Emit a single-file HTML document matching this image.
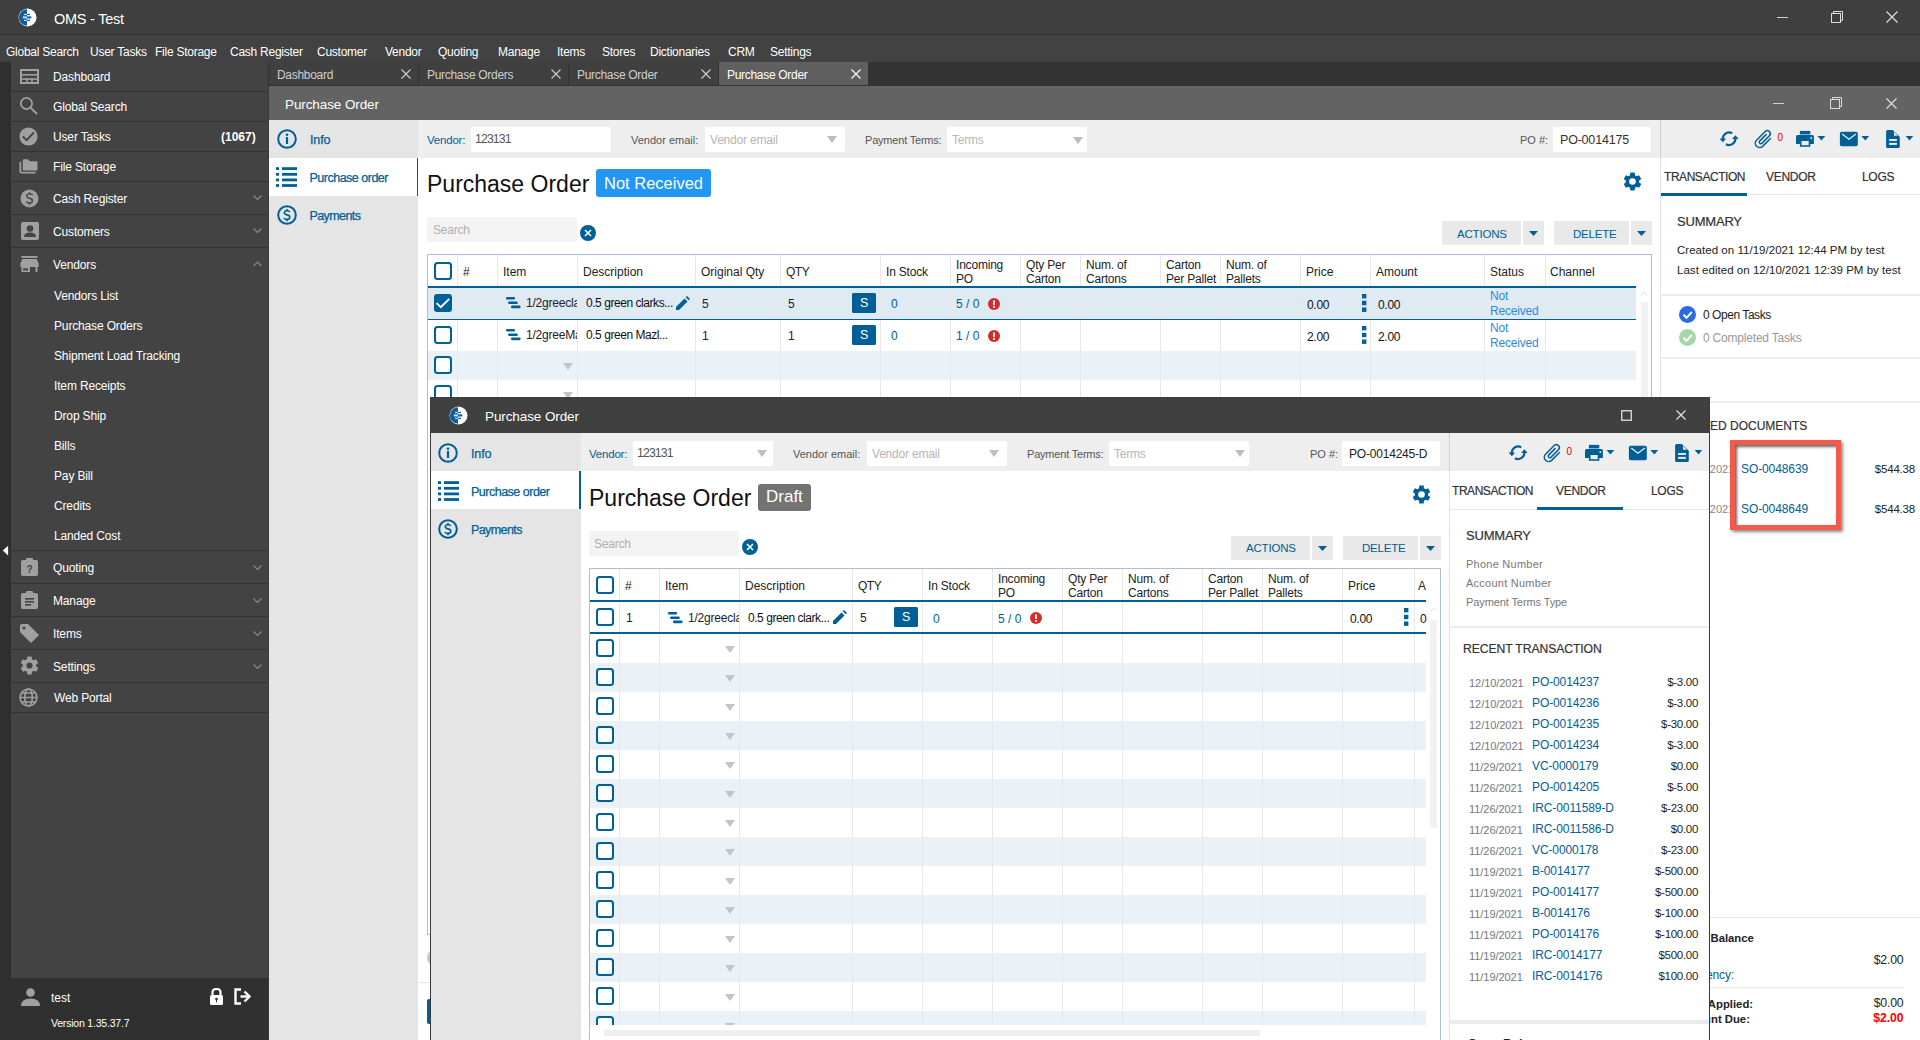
<!DOCTYPE html>
<html><head><meta charset="utf-8">
<style>
*{box-sizing:border-box;margin:0;padding:0}
html,body{width:1920px;height:1040px;overflow:hidden;background:#e5e5e5;font-family:"Liberation Sans",sans-serif;font-size:12px;color:#222}
.a{position:absolute}
.t{position:absolute;white-space:nowrap;line-height:16px}
svg{position:absolute;display:block}
/* title + menu */
#title{left:0;top:0;width:1920px;height:34px;background:#3f3f3f}
#menu{left:0;top:35px;width:1920px;height:27px;background:#424242}
#menu .t{color:#fff;top:8.6px;font-size:12px;letter-spacing:-0.25px}
/* sidebar */
#lstrip{left:0;top:62px;width:11px;height:978px;background:#2f2f2f}
#side{left:11px;top:62px;width:257px;height:916px;background:#434343}
.sep{position:absolute;left:0;width:257px;height:1px;background:#333333}
#side .t{color:#fff;font-size:12px;letter-spacing:-0.15px;margin-top:1.2px}
#userbar{left:11px;top:978px;width:258px;height:62px;background:#303030}
/* tabs */
#tabs{left:269px;top:62px;width:1651px;height:24px;background:#333}
.tab{position:absolute;top:0;height:24px;width:149px;background:#404040}
.tab .t{color:#c8c8c8;top:4px;left:8px;font-size:12px;letter-spacing:-0.2px}
.tab .x{position:absolute;left:131px;top:7px}
/* main window */
#pohdr{left:269px;top:86px;width:1651px;height:34px;background:#636363}
#nav{left:269px;top:120px;width:149px;height:920px;background:#e5e5e5}
#vbar{left:418px;top:120px;width:1502px;height:38px;background:#eeeeee}
#content{left:418px;top:158px;width:1242px;height:882px;background:#fff}
#rpanel{left:1660px;top:158px;width:260px;height:882px;background:#fff}
.inp{position:absolute;background:#fff;border-radius:2px}
.lbl{color:#555}
.blue{color:#0f5b99}
.grid{position:absolute;background:#fff;border:1px solid #a9bfd6}
.hd .t{color:#222}
.cb{position:absolute;width:18px;height:18px;border:2px solid #0f5b99;border-radius:3px;background:#fff}
.cbk{background:#0f5b99}
.vl{position:absolute;width:1px;background:#e6e8ea}
.bl{position:absolute;height:2px;background:#0f5b99}
.sbtn{position:absolute;width:23px;height:20px;background:#0f5b99;color:#fff;font-size:13px;text-align:center;line-height:20px}
.err{position:absolute;width:12px;height:12px;border-radius:50%;background:#d32a2a}
.caret{position:absolute;width:0;height:0;border-left:5px solid transparent;border-right:5px solid transparent;border-top:6px solid #bdbdbd}
.bcaret{position:absolute;width:0;height:0;border-left:5px solid transparent;border-right:5px solid transparent;border-top:5px solid #0f5b99}
.btn{position:absolute;background:#e9e9e9;color:#0f5b99;font-size:12px;text-align:center;line-height:24px}
/* modal */
#modal{left:430px;top:397px;width:1280px;height:643px;background:#fff;border-left:1px solid #3a3a3a;border-right:1px solid #3a3a3a}
</style></head><body>

<!-- TITLE BAR -->
<div id="title" class="a">
  <svg style="left:18px;top:8px" width="19" height="19" viewBox="0 0 19 19"><circle cx="9.5" cy="9.5" r="9" fill="#fff"/><path d="M9 1.3 A8.2 8.2 0 0 0 9 17.7 Z" fill="#0e5e9e"/><rect x="6" y="5.9" width="6" height="1.2" fill="#cfe0ee"/><rect x="4.8" y="8.4" width="8.5" height="2" fill="#cfe0ee"/><rect x="6" y="11.7" width="6" height="1.2" fill="#cfe0ee"/><rect x="9" y="5.9" width="3" height="1.2" fill="#0e5e9e"/><rect x="9" y="8.4" width="4.3" height="2" fill="#0e5e9e"/><rect x="9" y="11.7" width="3" height="1.2" fill="#0e5e9e"/></svg>
  <div class="t" style="left:54px;top:10.5px;color:#fff;font-size:14.5px;letter-spacing:-0.25px">OMS - Test</div>
  <div class="a" style="left:1777px;top:16.5px;width:11px;height:1.5px;background:#d0d0d0"></div>
  <svg style="left:1831px;top:11px" width="12" height="12" viewBox="0 0 12 12"><rect x="0.5" y="2.5" width="9" height="9" fill="none" stroke="#ddd"/><path d="M2.5 2.5V0.5H11.5V9.5H9.5" fill="none" stroke="#ddd"/></svg>
  <svg style="left:1886px;top:11px" width="12" height="12" viewBox="0 0 12 12"><path d="M0.5 0.5L11.5 11.5M11.5 0.5L0.5 11.5" stroke="#ddd" stroke-width="1.2"/></svg>
</div>
<div class="a" style="left:0;top:34px;width:1920px;height:1px;background:#313131"></div>

<!-- MENU -->
<div id="menu" class="a">
  <div class="t" style="left:6px">Global Search</div>
  <div class="t" style="left:90px">User Tasks</div>
  <div class="t" style="left:155px">File Storage</div>
  <div class="t" style="left:230px">Cash Register</div>
  <div class="t" style="left:317px">Customer</div>
  <div class="t" style="left:385px">Vendor</div>
  <div class="t" style="left:438px">Quoting</div>
  <div class="t" style="left:498px">Manage</div>
  <div class="t" style="left:557px">Items</div>
  <div class="t" style="left:602px">Stores</div>
  <div class="t" style="left:650px">Dictionaries</div>
  <div class="t" style="left:728px">CRM</div>
  <div class="t" style="left:770px">Settings</div>
</div>

<!-- SIDEBAR -->
<div id="lstrip" class="a"></div>
<svg style="left:2px;top:545px" width="8" height="11" viewBox="0 0 8 11"><path d="M0.8 5.5L6.1 0.8V10.4Z" fill="#fff"/></svg>
<div id="side" class="a">
  <!-- rows: top offsets relative to side top 62 -->
  <svg style="left:9px;top:7px" width="19" height="15" viewBox="0 0 19 15"><rect x="1" y="1" width="17" height="13" fill="none" stroke="#a0a0a0" stroke-width="2"/><rect x="1" y="5" width="17" height="1.6" fill="#a0a0a0"/><rect x="1" y="9.3" width="17" height="1.6" fill="#a0a0a0"/><rect x="6.2" y="9" width="1.6" height="5" fill="#a0a0a0"/><rect x="11.2" y="9" width="1.6" height="5" fill="#a0a0a0"/></svg>
  <div class="t" style="left:42px;top:6px">Dashboard</div>
  <div class="sep" style="top:29px"></div>
  <svg style="left:7.6px;top:34.4px" width="19" height="19" viewBox="0 0 19 19"><circle cx="7.5" cy="7.5" r="5.6" fill="none" stroke="#a0a0a0" stroke-width="1.8"/><path d="M11.6 11.6L17.5 17.5" stroke="#a0a0a0" stroke-width="1.9" stroke-linecap="round"/></svg>
  <div class="t" style="left:42px;top:36px">Global Search</div>
  <div class="sep" style="top:59px"></div>
  <svg style="left:8.2px;top:64.9px" width="19" height="19" viewBox="0 0 19 19"><circle cx="9.5" cy="9.5" r="9.1" fill="#a0a0a0"/><path d="M3.8 9.3L7.6 13.1L15 5.3" fill="none" stroke="#434343" stroke-width="1.9"/></svg>
  <div class="t" style="left:42px;top:66px">User Tasks</div>
  <div class="t" style="left:210px;top:66px;font-weight:bold;letter-spacing:0">(1067)</div>
  <div class="sep" style="top:89px"></div>
  <svg style="left:8px;top:97px" width="19" height="15" viewBox="0 0 19 15"><path d="M1.3 3V12.3Q1.3 13.6 2.6 13.6H16.5" fill="none" stroke="#a0a0a0" stroke-width="1.8"/><path d="M3.7 1.3Q3.7 0.3 4.7 0.3H9L10.8 2.3H17.5Q18.5 2.3 18.5 3.3V10.6Q18.5 11.6 17.5 11.6H4.7Q3.7 11.6 3.7 10.6Z" fill="#a0a0a0"/></svg>
  <div class="t" style="left:42px;top:96px">File Storage</div>
  <div class="sep" style="top:119px"></div>
  <svg style="left:9.2px;top:126.9px" width="19" height="19" viewBox="0 0 19 19"><circle cx="9.5" cy="9.5" r="9" fill="#a0a0a0"/><path d="M12.6 6.2Q11.9 4.9 9.5 4.9Q6.7 4.9 6.7 7.1Q6.7 8.8 9.5 9.3Q12.4 9.8 12.4 11.8Q12.4 14 9.5 14Q7.1 14 6.4 12.6" fill="none" stroke="#434343" stroke-width="1.4"/><path d="M9.5 3.2V5M9.5 13.9V15.8" stroke="#434343" stroke-width="1.4"/></svg>
  <div class="t" style="left:42px;top:128px">Cash Register</div>
  <svg style="left:242px;top:133px" width="9" height="6" viewBox="0 0 9 6"><path d="M0.5 0.5L4.5 4.5L8.5 0.5" fill="none" stroke="#8a8a8a" stroke-width="1.2"/></svg>
  <div class="sep" style="top:152px"></div>
  <svg style="left:10px;top:160px" width="18" height="18" viewBox="0 0 18 18"><rect x="0" y="0" width="18" height="18" rx="2" fill="#a0a0a0"/><circle cx="9" cy="6.5" r="3.3" fill="#434343"/><path d="M3 15Q3 10.5 9 10.5Q15 10.5 15 15Z" fill="#434343"/></svg>
  <div class="t" style="left:42px;top:161px">Customers</div>
  <svg style="left:242px;top:166px" width="9" height="6" viewBox="0 0 9 6"><path d="M0.5 0.5L4.5 4.5L8.5 0.5" fill="none" stroke="#8a8a8a" stroke-width="1.2"/></svg>
  <div class="sep" style="top:185px"></div>
  <svg style="left:9px;top:193px" width="19" height="18" viewBox="0 0 19 18"><rect x="1.4" y="1" width="16.1" height="1.9" fill="#a0a0a0"/><path d="M2.3 3.9H16.7L18.6 8.5V12H0.4V8.5Z" fill="#a0a0a0"/><rect x="1.4" y="12" width="8.6" height="5" fill="#a0a0a0"/><rect x="3.1" y="13.4" width="4.9" height="2" fill="#434343"/><rect x="15.5" y="12" width="2" height="5" fill="#a0a0a0"/></svg>
  <div class="t" style="left:42px;top:194px">Vendors</div>
  <svg style="left:242px;top:199px" width="9" height="6" viewBox="0 0 9 6"><path d="M0.5 5L4.5 1L8.5 5" fill="none" stroke="#8a8a8a" stroke-width="1.2"/></svg>
  <div class="t" style="left:43px;top:225px">Vendors List</div>
  <div class="t" style="left:43px;top:255px">Purchase Orders</div>
  <div class="t" style="left:43px;top:285px">Shipment Load Tracking</div>
  <div class="t" style="left:43px;top:315px">Item Receipts</div>
  <div class="t" style="left:43px;top:345px">Drop Ship</div>
  <div class="t" style="left:43px;top:375px">Bills</div>
  <div class="t" style="left:43px;top:405px">Pay Bill</div>
  <div class="t" style="left:43px;top:435px">Credits</div>
  <div class="t" style="left:43px;top:465px">Landed Cost</div>
  <div class="sep" style="top:488px"></div>
  <svg style="left:10px;top:496px" width="17" height="18" viewBox="0 0 17 18"><rect x="0" y="2" width="17" height="16" rx="2" fill="#a0a0a0"/><rect x="5" y="0" width="7" height="4" rx="1" fill="#a0a0a0"/><text x="8.5" y="15" font-family="Liberation Sans" font-size="10" font-weight="bold" fill="#434343" text-anchor="middle">?</text></svg>
  <div class="t" style="left:42px;top:497px">Quoting</div>
  <svg style="left:242px;top:503px" width="9" height="6" viewBox="0 0 9 6"><path d="M0.5 0.5L4.5 4.5L8.5 0.5" fill="none" stroke="#8a8a8a" stroke-width="1.2"/></svg>
  <div class="sep" style="top:521px"></div>
  <svg style="left:10px;top:529px" width="17" height="18" viewBox="0 0 17 18"><rect x="0" y="2" width="17" height="16" rx="2" fill="#a0a0a0"/><rect x="5" y="0" width="7" height="4" rx="1" fill="#a0a0a0"/><rect x="4" y="7" width="9" height="1.6" fill="#434343"/><rect x="4" y="10" width="9" height="1.6" fill="#434343"/><rect x="4" y="13" width="6" height="1.6" fill="#434343"/></svg>
  <div class="t" style="left:42px;top:530px">Manage</div>
  <svg style="left:242px;top:536px" width="9" height="6" viewBox="0 0 9 6"><path d="M0.5 0.5L4.5 4.5L8.5 0.5" fill="none" stroke="#8a8a8a" stroke-width="1.2"/></svg>
  <div class="sep" style="top:554px"></div>
  <svg style="left:9px;top:562px" width="19" height="19" viewBox="0 0 19 19"><path d="M0 2Q0 0 2 0H8L19 11L11 19L0 8Z" fill="#a0a0a0"/><circle cx="4" cy="4" r="1.6" fill="#434343"/></svg>
  <div class="t" style="left:42px;top:563px">Items</div>
  <svg style="left:242px;top:569px" width="9" height="6" viewBox="0 0 9 6"><path d="M0.5 0.5L4.5 4.5L8.5 0.5" fill="none" stroke="#8a8a8a" stroke-width="1.2"/></svg>
  <div class="sep" style="top:587px"></div>
  <svg style="left:9px;top:594px" width="19" height="19" viewBox="0 0 19 19"><g fill="#a0a0a0"><circle cx="9.5" cy="9.5" r="6.7"/><path d="M7.3 0.5999999999999996H11.7L12.1 4.5H6.9Z M7.3 18.4H11.7L12.1 14.5H6.9Z" transform="rotate(0 9.5 9.5)"/><path d="M7.3 0.5999999999999996H11.7L12.1 4.5H6.9Z M7.3 18.4H11.7L12.1 14.5H6.9Z" transform="rotate(60 9.5 9.5)"/><path d="M7.3 0.5999999999999996H11.7L12.1 4.5H6.9Z M7.3 18.4H11.7L12.1 14.5H6.9Z" transform="rotate(120 9.5 9.5)"/></g><circle cx="9.5" cy="9.5" r="3.1" fill="#434343"/></svg>
  <div class="t" style="left:42px;top:596px">Settings</div>
  <svg style="left:242px;top:602px" width="9" height="6" viewBox="0 0 9 6"><path d="M0.5 0.5L4.5 4.5L8.5 0.5" fill="none" stroke="#8a8a8a" stroke-width="1.2"/></svg>
  <div class="sep" style="top:620px"></div>
  <svg style="left:8px;top:626px" width="19" height="19" viewBox="0 0 19 19"><g fill="none" stroke="#a0a0a0" stroke-width="1.6"><circle cx="9.5" cy="9.5" r="8.5"/><ellipse cx="9.5" cy="9.5" rx="3.8" ry="8.5"/><path d="M1 9.5H18M2.5 5H16.5M2.5 14H16.5"/></g></svg>
  <div class="t" style="left:43px;top:627px">Web Portal</div>
  <div class="sep" style="top:650px"></div>
</div>
<div id="userbar" class="a">
  <svg style="left:10px;top:10px" width="19" height="18" viewBox="0 0 19 18"><circle cx="9.5" cy="4.5" r="4.3" fill="#a0a0a0"/><path d="M0 18Q0 10.5 9.5 10.5Q19 10.5 19 18Z" fill="#a0a0a0"/></svg>
  <div class="t" style="left:40px;top:12px;color:#fff;font-size:12px">test</div>
  <svg style="left:198px;top:10px" width="15" height="17" viewBox="0 0 15 17"><path d="M3.5 7V4.5Q3.5 1 7.5 1Q11.5 1 11.5 4.5V7" fill="none" stroke="#fff" stroke-width="2.2"/><rect x="1" y="7" width="13" height="10" rx="1.5" fill="#fff"/><circle cx="7.5" cy="11" r="1.3" fill="#303030"/><rect x="7" y="11" width="1" height="3.2" fill="#303030"/></svg>
  <svg style="left:223px;top:10px" width="18" height="17" viewBox="0 0 18 17"><path d="M7 1.5H1.5V15.5H7" fill="none" stroke="#fff" stroke-width="2.4"/><path d="M6.5 8.5H14" stroke="#fff" stroke-width="2.4"/><path d="M10.5 3.5L15.5 8.5L10.5 13.5" fill="none" stroke="#fff" stroke-width="2.4"/></svg>
  <div class="t" style="left:40px;top:37px;color:#fff;font-size:10.5px;letter-spacing:-0.2px">Version 1.35.37.7</div>
</div>

<!-- TABS -->
<div class="a" style="left:268px;top:62px;width:1652px;height:24px;background:#333333;"></div>
<div class="a" style="left:268px;top:86px;width:1px;height:954px;background:#3a3a3a;"></div>
<div class="a" style="left:269px;top:62px;width:149px;height:23px;background:#404040;"></div>
<div class="t" style="left:277px;top:68.14px;font-size:12px;line-height:14px;color:#cfcfcf;font-weight:normal;letter-spacing:-0.3px;">Dashboard</div>
<svg style="left:401px;top:69px" width="10" height="10" viewBox="0 0 10 10"><path d="M0.5 0.5L9.5 9.5M9.5 0.5L0.5 9.5" stroke="#cfcfcf" stroke-width="1.1"/></svg>
<div class="a" style="left:419px;top:62px;width:149px;height:23px;background:#404040;"></div>
<div class="t" style="left:427px;top:68.14px;font-size:12px;line-height:14px;color:#cfcfcf;font-weight:normal;letter-spacing:-0.3px;">Purchase Orders</div>
<svg style="left:551px;top:69px" width="10" height="10" viewBox="0 0 10 10"><path d="M0.5 0.5L9.5 9.5M9.5 0.5L0.5 9.5" stroke="#cfcfcf" stroke-width="1.1"/></svg>
<div class="a" style="left:569px;top:62px;width:149px;height:23px;background:#404040;"></div>
<div class="t" style="left:577px;top:68.14px;font-size:12px;line-height:14px;color:#cfcfcf;font-weight:normal;letter-spacing:-0.3px;">Purchase Order</div>
<svg style="left:701px;top:69px" width="10" height="10" viewBox="0 0 10 10"><path d="M0.5 0.5L9.5 9.5M9.5 0.5L0.5 9.5" stroke="#cfcfcf" stroke-width="1.1"/></svg>
<div class="a" style="left:719px;top:62px;width:149px;height:23px;background:#5f5f5f;"></div>
<div class="t" style="left:727px;top:68.14px;font-size:12px;line-height:14px;color:#fff;font-weight:normal;letter-spacing:-0.3px;">Purchase Order</div>
<svg style="left:851px;top:69px" width="10" height="10" viewBox="0 0 10 10"><path d="M0.5 0.5L9.5 9.5M9.5 0.5L0.5 9.5" stroke="#fff" stroke-width="1.1"/></svg>
<div class="a" style="left:269px;top:86px;width:1651px;height:34px;background:#636363;"></div>
<div class="t" style="left:285px;top:96.62px;font-size:13.5px;line-height:16px;color:#fff;font-weight:normal;letter-spacing:-0.1px;">Purchase Order</div>
<div class="a" style="left:1773px;top:102.5px;width:11px;height:1.5px;background:#d0d0d0;"></div>
<svg style="left:1830px;top:97px" width="12" height="12" viewBox="0 0 12 12"><rect x="0.5" y="2.5" width="9" height="9" fill="none" stroke="#dcdcdc"/><path d="M2.5 2.5V0.5H11.5V9.5H9.5" fill="none" stroke="#dcdcdc"/></svg>
<svg style="left:1886px;top:98px" width="11" height="11" viewBox="0 0 11 11"><path d="M0.5 0.5L10.5 10.5M10.5 0.5L0.5 10.5" stroke="#dcdcdc" stroke-width="1.2"/></svg>
<div class="a" style="left:269px;top:120px;width:149px;height:920px;background:#e5e5e5;"></div>
<div class="a" style="left:269px;top:158px;width:148px;height:38px;background:#ffffff;"></div>
<div class="a" style="left:417px;top:158px;width:2px;height:38px;background:#006096;"></div>
<svg style="left:276.5px;top:129px" width="20" height="20" viewBox="0 0 20 20"><circle cx="10" cy="10" r="8.8" fill="none" stroke="#006096" stroke-width="2"/><circle cx="10" cy="5.8" r="1.3" fill="#006096"/><rect x="8.9" y="8" width="2.2" height="7" fill="#006096"/></svg>
<div class="t" style="left:310px;top:132.67px;font-size:12.5px;line-height:15px;color:#006096;font-weight:normal;letter-spacing:-0.1px;-webkit-text-stroke:0.25px #006096">Info</div>
<svg style="left:276px;top:167px" width="21" height="20" viewBox="0 0 21 20"><g fill="#006096"><rect x="0" y="0.2" width="3" height="2.8"/><rect x="6" y="0.2" width="15" height="2.8"/><rect x="0" y="5.9" width="3" height="2.8"/><rect x="6" y="5.9" width="15" height="2.8"/><rect x="0" y="11.5" width="3" height="2.8"/><rect x="6" y="11.5" width="15" height="2.8"/><rect x="0" y="17.1" width="3" height="2.8"/><rect x="6" y="17.1" width="15" height="2.8"/></g></svg>
<div class="t" style="left:309.5px;top:170.67px;font-size:12.5px;line-height:15px;color:#006096;font-weight:normal;letter-spacing:-0.5px;-webkit-text-stroke:0.25px #006096">Purchase order</div>
<svg style="left:276.5px;top:205px" width="20" height="20" viewBox="0 0 20 20"><circle cx="10" cy="10" r="8.8" fill="none" stroke="#006096" stroke-width="2"/><path d="M12.9 6.9Q12.2 5.7 10 5.7Q7.3 5.7 7.3 7.8Q7.3 9.4 10 9.9Q12.8 10.4 12.8 12.3Q12.8 14.4 10 14.4Q7.7 14.4 7 13" fill="none" stroke="#006096" stroke-width="1.6"/><path d="M10 3.9V5.8M10 14.3V16.2" stroke="#006096" stroke-width="1.6"/></svg>
<div class="t" style="left:309.5px;top:208.67px;font-size:12.5px;line-height:15px;color:#006096;font-weight:normal;letter-spacing:-0.6px;-webkit-text-stroke:0.25px #006096">Payments</div>
<div class="a" style="left:418px;top:120px;width:1502px;height:38px;background:#eeeeee;"></div>
<div class="a" style="left:1660px;top:120px;width:1px;height:38px;background:#d0d0d0;"></div>
<div class="a" style="left:418px;top:158px;width:1242px;height:882px;background:#ffffff;"></div>
<div class="a" style="left:1660px;top:158px;width:1px;height:882px;background:#e4e4e4;"></div>
<div class="a" style="left:1661px;top:158px;width:259px;height:882px;background:#ffffff;"></div>
<div class="t" style="left:427px;top:133.32px;font-size:11.5px;line-height:14px;color:#006096;font-weight:normal;letter-spacing:-0.2px;">Vendor:</div>
<div class="a" style="left:471px;top:127px;width:140px;height:25px;background:#fff;border-radius:2px"></div>
<div class="t" style="left:475px;top:132.24px;font-size:12.3px;line-height:15px;color:#555;font-weight:normal;letter-spacing:-0.9px;">123131</div>
<div class="t" style="left:631px;top:133.99px;font-size:11px;line-height:13px;color:#555;font-weight:normal;letter-spacing:0px;">Vendor email:</div>
<div class="a" style="left:705px;top:127px;width:140px;height:25px;background:#fff;border-radius:2px"></div>
<div class="t" style="left:710px;top:133.34px;font-size:12px;line-height:14px;color:#b5b5b5;font-weight:normal;letter-spacing:-0.2px;">Vendor email</div>
<svg style="left:827px;top:136px" width="10" height="7" viewBox="0 0 10 7"><path d="M0 0H10L5.0 7Z" fill="#bdbdbd"/></svg>
<div class="t" style="left:865px;top:133.99px;font-size:11px;line-height:13px;color:#555;font-weight:normal;letter-spacing:-0.2px;">Payment Terms:</div>
<div class="a" style="left:947px;top:127px;width:140px;height:25px;background:#fff;border-radius:2px"></div>
<div class="t" style="left:952px;top:133.34px;font-size:12px;line-height:14px;color:#b5b5b5;font-weight:normal;letter-spacing:-0.2px;">Terms</div>
<svg style="left:1073px;top:137px" width="10" height="7" viewBox="0 0 10 7"><path d="M0 0H10L5.0 7Z" fill="#bdbdbd"/></svg>
<div class="t" style="left:1520px;top:133.99px;font-size:11px;line-height:13px;color:#555;font-weight:normal;letter-spacing:0.0px;">PO #:</div>
<div class="a" style="left:1553px;top:127px;width:98px;height:25px;background:#fff;border-radius:2px"></div>
<div class="t" style="left:1560px;top:133.17px;font-size:12.5px;line-height:15px;color:#333;font-weight:normal;letter-spacing:-0.2px;">PO-0014175</div>
<svg style="left:1715px;top:125px" width="200" height="30" viewBox="0 0 200 30"><g fill="none" stroke="#006096" stroke-width="2.1"><path d="M17.25 8.34A6.3 6.3 0 0 0 7.8 14"/><path d="M10.95 19.26A6.3 6.3 0 0 0 20.4 13.6"/></g><path d="M4.6 13.6H11.1L7.85 17.2Z" fill="#006096"/><path d="M17.1 13.9H23.6L20.35 10.3Z" fill="#006096"/><path d="M55.45 13.55L47.65 21.35A4.35 4.35 0 0 1 41.5 15.2L50.15 6.55A3 3 0 0 1 54.4 10.8L46.85 18.35A1.6 1.6 0 0 1 44.6 16.1L51.05 9.65" fill="none" stroke="#006096" stroke-width="1.5" stroke-linecap="round"/><rect x="84.9" y="5.9" width="10.4" height="3.2" fill="#006096"/><rect x="84.9" y="9.1" width="10.4" height="1" fill="#7fa6c8"/><path d="M82.5 10.1H97.4Q98.9 10.1 98.9 11.6V18.9H81V11.6Q81 10.1 82.5 10.1Z" fill="#006096"/><circle cx="96.3" cy="13" r="0.9" fill="#eee"/><rect x="84.9" y="15.3" width="10.4" height="6.5" fill="#006096"/><rect x="86.5" y="16" width="7.2" height="4.2" fill="#eee"/><path d="M102.5 11.1H110.3L106.4 15.6Z" fill="#006096"/><rect x="124.9" y="6.8" width="17.9" height="14.4" rx="1.8" fill="#006096"/><path d="M127.2 9.1L134 14.3L140.9 9.1" fill="none" stroke="#eee" stroke-width="1.3"/><path d="M146.4 11.1H154.2L150.3 15.6Z" fill="#006096"/><path d="M172.8 4.9H177.7L184.8 11.7V21.4Q184.8 23.1 183.1 23.1H172.8Q171.1 23.1 171.1 21.4V6.6Q171.1 4.9 172.8 4.9Z" fill="#006096"/><path d="M179 6.8L182.9 10.7H179Z" fill="#eee"/><rect x="174.1" y="14" width="7.8" height="1.9" fill="#eee"/><rect x="174.1" y="17.9" width="7.8" height="2" fill="#eee"/><path d="M190.7 11.1H198.2L194.5 15.6Z" fill="#006096"/></svg>
<div class="t" style="left:1777.5px;top:132.03px;font-size:10px;line-height:12px;color:#e60000;font-weight:normal;letter-spacing:0.0px;">0</div>
<div class="t" style="left:427px;top:169.93px;font-size:23px;line-height:28px;color:#111;font-weight:normal;letter-spacing:0px;">Purchase Order</div>
<div class="a" style="left:596px;top:169px;width:115px;height:28.3px;background:#2196f3;border-radius:3px"></div>
<div class="t" style="left:604px;top:173.08px;font-size:16.5px;line-height:20px;color:#fff;font-weight:normal;letter-spacing:0px;">Not Received</div>
<svg style="left:1622.75px;top:171.5px" width="19" height="19" viewBox="0 0 19 19"><g fill="#006096"><circle cx="9.5" cy="9.5" r="6.7"/><path d="M7.3 0.5999999999999996H11.7L12.1 4.5H6.9Z M7.3 18.4H11.7L12.1 14.5H6.9Z" transform="rotate(0 9.5 9.5)"/><path d="M7.3 0.5999999999999996H11.7L12.1 4.5H6.9Z M7.3 18.4H11.7L12.1 14.5H6.9Z" transform="rotate(60 9.5 9.5)"/><path d="M7.3 0.5999999999999996H11.7L12.1 4.5H6.9Z M7.3 18.4H11.7L12.1 14.5H6.9Z" transform="rotate(120 9.5 9.5)"/></g><circle cx="9.5" cy="9.5" r="3.3" fill="#fff"/></svg>
<div class="a" style="left:427px;top:217px;width:150px;height:25px;background:#f3f3f3;border-radius:2px"></div>
<div class="t" style="left:433px;top:223.34px;font-size:12px;line-height:14px;color:#b0b0b0;font-weight:normal;letter-spacing:-0.2px;">Search</div>
<svg style="left:580px;top:225px" width="16" height="16" viewBox="0 0 16 16"><circle cx="8" cy="8" r="8" fill="#006096"/><path d="M5 5L11 11M11 5L5 11" stroke="#fff" stroke-width="1.6"/></svg>
<div class="a" style="left:1442px;top:221px;width:79px;height:24px;background:#e9e9e9;"></div>
<div class="t" style="left:1457px;top:226.52px;font-size:11.5px;line-height:14px;color:#006096;font-weight:normal;letter-spacing:-0.2px;">ACTIONS</div>
<div class="a" style="left:1523px;top:221px;width:21px;height:24px;background:#e9e9e9;"></div>
<svg style="left:1529px;top:231px" width="9" height="5" viewBox="0 0 9 5"><path d="M0 0H9L4.5 5Z" fill="#006096"/></svg>
<div class="a" style="left:1554px;top:221px;width:75px;height:24px;background:#e9e9e9;"></div>
<div class="t" style="left:1573px;top:226.52px;font-size:11.5px;line-height:14px;color:#006096;font-weight:normal;letter-spacing:-0.2px;">DELETE</div>
<div class="a" style="left:1631px;top:221px;width:21px;height:24px;background:#e9e9e9;"></div>
<svg style="left:1637px;top:231px" width="9" height="5" viewBox="0 0 9 5"><path d="M0 0H9L4.5 5Z" fill="#006096"/></svg>
<div class="a" style="left:427px;top:254px;width:1225px;height:143px;border:1px solid #abc0d6;border-bottom:none;background:#fff"></div>
<div class="a" style="left:428px;top:288px;width:1208px;height:31px;background:#dfeaf3;"></div>
<div class="a" style="left:428px;top:351px;width:1208px;height:29px;background:#ebf2f7;"></div>
<div class="a" style="left:457px;top:255px;width:1px;height:142px;background:#e6e8ea;"></div>
<div class="a" style="left:497px;top:255px;width:1px;height:142px;background:#e6e8ea;"></div>
<div class="a" style="left:577px;top:255px;width:1px;height:142px;background:#e6e8ea;"></div>
<div class="a" style="left:695px;top:255px;width:1px;height:142px;background:#e6e8ea;"></div>
<div class="a" style="left:780px;top:255px;width:1px;height:142px;background:#e6e8ea;"></div>
<div class="a" style="left:880px;top:255px;width:1px;height:142px;background:#e6e8ea;"></div>
<div class="a" style="left:950px;top:255px;width:1px;height:142px;background:#e6e8ea;"></div>
<div class="a" style="left:1020px;top:255px;width:1px;height:142px;background:#e6e8ea;"></div>
<div class="a" style="left:1080px;top:255px;width:1px;height:142px;background:#e6e8ea;"></div>
<div class="a" style="left:1160px;top:255px;width:1px;height:142px;background:#e6e8ea;"></div>
<div class="a" style="left:1220px;top:255px;width:1px;height:142px;background:#e6e8ea;"></div>
<div class="a" style="left:1300px;top:255px;width:1px;height:142px;background:#e6e8ea;"></div>
<div class="a" style="left:1370px;top:255px;width:1px;height:142px;background:#e6e8ea;"></div>
<div class="a" style="left:1484px;top:255px;width:1px;height:142px;background:#e6e8ea;"></div>
<div class="a" style="left:1545px;top:255px;width:1px;height:142px;background:#e6e8ea;"></div>
<div class="a" style="left:428px;top:286px;width:1208px;height:2px;background:#006096;"></div>
<div class="a" style="left:428px;top:318.8px;width:1208px;height:1.7px;background:#006096;"></div>
<div class="a" style="left:1640.5px;top:301.5px;width:7px;height:96px;background:#f2f2f2;"></div>
<svg style="left:1640px;top:291px" width="8" height="5" viewBox="0 0 8 5"><path d="M0.5 4.5L4 1L7.5 4.5" fill="none" stroke="#e6e6e6" stroke-width="1"/></svg>
<svg style="left:434px;top:262px" width="18" height="18" viewBox="0 0 18 18"><rect x="1" y="1" width="16" height="16" rx="2.5" fill="#fff" stroke="#006096" stroke-width="2"/></svg>
<div class="t" style="left:463px;top:264.84px;font-size:12px;line-height:14px;color:#222;font-weight:normal;letter-spacing:0.0px;">#</div>
<div class="t" style="left:503px;top:264.84px;font-size:12px;line-height:14px;color:#222;font-weight:normal;letter-spacing:0.0px;">Item</div>
<div class="t" style="left:583px;top:264.84px;font-size:12px;line-height:14px;color:#222;font-weight:normal;letter-spacing:0.0px;">Description</div>
<div class="t" style="left:701px;top:264.84px;font-size:12px;line-height:14px;color:#222;font-weight:normal;letter-spacing:0.0px;">Original Qty</div>
<div class="t" style="left:786px;top:264.84px;font-size:12px;line-height:14px;color:#222;font-weight:normal;letter-spacing:-0.5px;">QTY</div>
<div class="t" style="left:886px;top:264.84px;font-size:12px;line-height:14px;color:#222;font-weight:normal;letter-spacing:-0.2px;">In Stock</div>
<div class="t" style="left:956px;top:257.54px;font-size:12px;line-height:14px;color:#222;font-weight:normal;letter-spacing:-0.2px;">Incoming</div>
<div class="t" style="left:956px;top:272.04px;font-size:12px;line-height:14px;color:#222;font-weight:normal;letter-spacing:-0.2px;">PO</div>
<div class="t" style="left:1026px;top:257.54px;font-size:12px;line-height:14px;color:#222;font-weight:normal;letter-spacing:-0.2px;">Qty Per</div>
<div class="t" style="left:1026px;top:272.04px;font-size:12px;line-height:14px;color:#222;font-weight:normal;letter-spacing:-0.2px;">Carton</div>
<div class="t" style="left:1086px;top:257.54px;font-size:12px;line-height:14px;color:#222;font-weight:normal;letter-spacing:-0.2px;">Num. of</div>
<div class="t" style="left:1086px;top:272.04px;font-size:12px;line-height:14px;color:#222;font-weight:normal;letter-spacing:-0.2px;">Cartons</div>
<div class="t" style="left:1166px;top:257.54px;font-size:12px;line-height:14px;color:#222;font-weight:normal;letter-spacing:-0.2px;">Carton</div>
<div class="t" style="left:1166px;top:272.04px;font-size:12px;line-height:14px;color:#222;font-weight:normal;letter-spacing:-0.2px;">Per Pallet</div>
<div class="t" style="left:1226px;top:257.54px;font-size:12px;line-height:14px;color:#222;font-weight:normal;letter-spacing:-0.2px;">Num. of</div>
<div class="t" style="left:1226px;top:272.04px;font-size:12px;line-height:14px;color:#222;font-weight:normal;letter-spacing:-0.2px;">Pallets</div>
<div class="t" style="left:1306px;top:264.84px;font-size:12px;line-height:14px;color:#222;font-weight:normal;letter-spacing:0.0px;">Price</div>
<div class="t" style="left:1376px;top:264.84px;font-size:12px;line-height:14px;color:#222;font-weight:normal;letter-spacing:0.0px;">Amount</div>
<div class="t" style="left:1490px;top:264.84px;font-size:12px;line-height:14px;color:#222;font-weight:normal;letter-spacing:0.0px;">Status</div>
<div class="t" style="left:1550px;top:264.84px;font-size:12px;line-height:14px;color:#222;font-weight:normal;letter-spacing:0.0px;">Channel</div>
<svg style="left:434px;top:294px" width="18" height="18" viewBox="0 0 18 18"><rect x="0" y="0" width="18" height="18" rx="3" fill="#006096"/><path d="M2.6 9.1L6.9 13.2L15.2 4.8" fill="none" stroke="#fff" stroke-width="1.9"/></svg>
<svg style="left:506px;top:297.4px" width="15" height="12" viewBox="0 0 15 12"><g fill="#006096"><rect x="0" y="0" width="9" height="2.6" rx="1.1"/><rect x="2.1" y="4.4" width="9.7" height="2.6" rx="1.1"/><rect x="5" y="8.6" width="9.6" height="2.6" rx="1.1"/></g></svg>
<div class="a" style="left:526px;top:294px;width:51px;height:18px;overflow:hidden">
<div class="t" style="left:0px;top:2.34px;font-size:12px;line-height:14px;color:#222;font-weight:normal;letter-spacing:-0.2px;">1/2greeclarks</div>
</div>
<div class="t" style="left:586px;top:296.34px;font-size:12px;line-height:14px;color:#111;font-weight:normal;letter-spacing:-0.45px;">0.5 green clarks...</div>
<svg style="left:676px;top:296px" width="14" height="14" viewBox="0 0 14 14"><path d="M0 14V11L8.5 2.5L11.5 5.5L3 14Z" fill="#006096"/><path d="M9.7 1.3L11 0L14 3L12.7 4.3Z" fill="#006096"/></svg>
<div class="t" style="left:702px;top:296.84px;font-size:12px;line-height:14px;color:#222;font-weight:normal;letter-spacing:0.0px;">5</div>
<div class="t" style="left:788px;top:297.34px;font-size:12px;line-height:14px;color:#222;font-weight:normal;letter-spacing:0.0px;">5</div>
<div class="a" style="left:852px;top:293px;width:24px;height:20px;background:#006096;border-radius:1.5px"></div>
<div class="t" style="left:860px;top:296.17px;font-size:12.5px;line-height:15px;color:#fff;font-weight:normal;letter-spacing:0.0px;">S</div>
<div class="t" style="left:891px;top:297.34px;font-size:12px;line-height:14px;color:#006096;font-weight:normal;letter-spacing:0.0px;">0</div>
<div class="t" style="left:956px;top:297.34px;font-size:12px;line-height:14px;color:#006096;font-weight:normal;letter-spacing:0px;">5 / 0</div>
<svg style="left:987.5px;top:297.5px" width="12" height="12" viewBox="0 0 12 12"><circle cx="6" cy="6" r="6" fill="#d62b2b"/><rect x="5.1" y="2.4" width="1.8" height="4.6" fill="#fff"/><rect x="5.1" y="8" width="1.8" height="1.8" fill="#fff"/></svg>
<div class="t" style="left:1307px;top:297.84px;font-size:12px;line-height:14px;color:#111;font-weight:normal;letter-spacing:-0.3px;">0.00</div>
<svg style="left:1361.6px;top:294.1px" width="5" height="18" viewBox="0 0 5 18"><g fill="#006096"><rect x="0" y="0" width="4.4" height="4.4"/><rect x="0" y="6.8" width="4.4" height="4.4"/><rect x="0" y="13.5" width="4.4" height="4.4"/></g></svg>
<div class="t" style="left:1378px;top:297.84px;font-size:12px;line-height:14px;color:#111;font-weight:normal;letter-spacing:-0.3px;">0.00</div>
<div class="t" style="left:1490px;top:288.84px;font-size:12px;line-height:14px;color:#2e8ade;font-weight:normal;letter-spacing:-0.2px;">Not</div>
<div class="t" style="left:1490px;top:303.84px;font-size:12px;line-height:14px;color:#2e8ade;font-weight:normal;letter-spacing:-0.2px;">Received</div>
<svg style="left:434px;top:326px" width="18" height="18" viewBox="0 0 18 18"><rect x="1" y="1" width="16" height="16" rx="2.5" fill="#fff" stroke="#006096" stroke-width="2"/></svg>
<svg style="left:506px;top:329.4px" width="15" height="12" viewBox="0 0 15 12"><g fill="#006096"><rect x="0" y="0" width="9" height="2.6" rx="1.1"/><rect x="2.1" y="4.4" width="9.7" height="2.6" rx="1.1"/><rect x="5" y="8.6" width="9.6" height="2.6" rx="1.1"/></g></svg>
<div class="a" style="left:526px;top:326px;width:51px;height:18px;overflow:hidden">
<div class="t" style="left:0px;top:2.34px;font-size:12px;line-height:14px;color:#222;font-weight:normal;letter-spacing:-0.2px;">1/2greeMazl</div>
</div>
<div class="t" style="left:586px;top:328.34px;font-size:12px;line-height:14px;color:#111;font-weight:normal;letter-spacing:-0.45px;">0.5 green Mazl...</div>
<div class="t" style="left:702px;top:328.84px;font-size:12px;line-height:14px;color:#222;font-weight:normal;letter-spacing:0.0px;">1</div>
<div class="t" style="left:788px;top:329.34px;font-size:12px;line-height:14px;color:#222;font-weight:normal;letter-spacing:0.0px;">1</div>
<div class="a" style="left:852px;top:325px;width:24px;height:20px;background:#006096;border-radius:1.5px"></div>
<div class="t" style="left:860px;top:328.17px;font-size:12.5px;line-height:15px;color:#fff;font-weight:normal;letter-spacing:0.0px;">S</div>
<div class="t" style="left:891px;top:329.34px;font-size:12px;line-height:14px;color:#006096;font-weight:normal;letter-spacing:0.0px;">0</div>
<div class="t" style="left:956px;top:329.34px;font-size:12px;line-height:14px;color:#006096;font-weight:normal;letter-spacing:0px;">1 / 0</div>
<svg style="left:987.5px;top:329.5px" width="12" height="12" viewBox="0 0 12 12"><circle cx="6" cy="6" r="6" fill="#d62b2b"/><rect x="5.1" y="2.4" width="1.8" height="4.6" fill="#fff"/><rect x="5.1" y="8" width="1.8" height="1.8" fill="#fff"/></svg>
<div class="t" style="left:1307px;top:329.84px;font-size:12px;line-height:14px;color:#111;font-weight:normal;letter-spacing:-0.3px;">2.00</div>
<svg style="left:1361.6px;top:326px" width="5" height="18" viewBox="0 0 5 18"><g fill="#006096"><rect x="0" y="0" width="4.4" height="4.4"/><rect x="0" y="6.8" width="4.4" height="4.4"/><rect x="0" y="13.5" width="4.4" height="4.4"/></g></svg>
<div class="t" style="left:1378px;top:329.84px;font-size:12px;line-height:14px;color:#111;font-weight:normal;letter-spacing:-0.3px;">2.00</div>
<div class="t" style="left:1490px;top:320.84px;font-size:12px;line-height:14px;color:#2e8ade;font-weight:normal;letter-spacing:-0.2px;">Not</div>
<div class="t" style="left:1490px;top:335.84px;font-size:12px;line-height:14px;color:#2e8ade;font-weight:normal;letter-spacing:-0.2px;">Received</div>
<svg style="left:434px;top:356px" width="18" height="18" viewBox="0 0 18 18"><rect x="1" y="1" width="16" height="16" rx="2.5" fill="#fff" stroke="#006096" stroke-width="2"/></svg>
<svg style="left:563px;top:362.5px" width="10" height="7" viewBox="0 0 10 7"><path d="M0 0H10L5.0 7Z" fill="#c4c4c4"/></svg>
<svg style="left:434px;top:385px" width="18" height="18" viewBox="0 0 18 18"><rect x="1" y="1" width="16" height="16" rx="2.5" fill="#fff" stroke="#006096" stroke-width="2"/></svg>
<svg style="left:563px;top:391.5px" width="10" height="7" viewBox="0 0 10 7"><path d="M0 0H10L5.0 7Z" fill="#c4c4c4"/></svg>
<div class="t" style="left:1664px;top:169.84px;font-size:12px;line-height:14px;color:#333;font-weight:normal;letter-spacing:-0.45px;-webkit-text-stroke:0.2px #333">TRANSACTION</div>
<div class="t" style="left:1766px;top:169.84px;font-size:12px;line-height:14px;color:#333;font-weight:normal;letter-spacing:-0.3px;-webkit-text-stroke:0.2px #333">VENDOR</div>
<div class="t" style="left:1862px;top:169.84px;font-size:12px;line-height:14px;color:#333;font-weight:normal;letter-spacing:-0.3px;-webkit-text-stroke:0.2px #333">LOGS</div>
<div class="a" style="left:1661px;top:194px;width:259px;height:1px;background:#e6e6e6;"></div>
<div class="a" style="left:1661px;top:193.2px;width:86px;height:2.7px;background:#006096;"></div>
<div class="t" style="left:1677px;top:213.50px;font-size:13px;line-height:16px;color:#333;font-weight:normal;letter-spacing:-0.2px;-webkit-text-stroke:0.2px #333">SUMMARY</div>
<div class="t" style="left:1677px;top:242.52px;font-size:11.5px;line-height:14px;color:#222;font-weight:normal;letter-spacing:0.03px;">Created on 11/19/2021 12:44 PM by test</div>
<div class="t" style="left:1677px;top:262.52px;font-size:11.5px;line-height:14px;color:#222;font-weight:normal;letter-spacing:0.03px;">Last edited on 12/10/2021 12:39 PM by test</div>
<div class="a" style="left:1661px;top:294px;width:259px;height:2px;background:#ececec;"></div>
<svg style="left:1679px;top:306px" width="17" height="17" viewBox="0 0 17 17"><circle cx="8.5" cy="8.5" r="8.5" fill="#2b6be0"/><path d="M4.5 8.8L7.5 11.8L12.8 6" fill="none" stroke="#fff" stroke-width="2"/></svg>
<div class="t" style="left:1703px;top:307.84px;font-size:12px;line-height:14px;color:#222;font-weight:normal;letter-spacing:-0.45px;">0 Open Tasks</div>
<svg style="left:1679px;top:329px" width="17" height="17" viewBox="0 0 17 17"><circle cx="8.5" cy="8.5" r="8.5" fill="#a7d7a8"/><path d="M4.5 8.8L7.5 11.8L12.8 6" fill="none" stroke="#fff" stroke-width="2"/></svg>
<div class="t" style="left:1703px;top:330.84px;font-size:12px;line-height:14px;color:#999;font-weight:normal;letter-spacing:-0.2px;">0 Completed Tasks</div>
<div class="a" style="left:1661px;top:357px;width:259px;height:2px;background:#ececec;"></div>
<div class="a" style="left:1661px;top:401px;width:259px;height:2px;background:#ececec;"></div>
<div class="t" style="left:1672.2px;top:418.84px;font-size:12px;line-height:14px;color:#333;font-weight:normal;letter-spacing:0px;-webkit-text-stroke:0.2px #333">RELATED DOCUMENTS</div>
<div class="t" style="left:1680px;top:462.69px;font-size:11px;line-height:13px;color:#888;font-weight:normal;letter-spacing:0.0px;">11/19/2021</div>
<div class="t" style="left:1741px;top:461.84px;font-size:12px;line-height:14px;color:#006096;font-weight:normal;letter-spacing:-0.1px;">SO-0048639</div>
<div class="t" style="right:5px;top:462.02px;font-size:11.5px;line-height:14px;color:#222;font-weight:normal;letter-spacing:-0.2px;text-align:right">$544.38</div>
<div class="t" style="left:1680px;top:502.69px;font-size:11px;line-height:13px;color:#888;font-weight:normal;letter-spacing:0.0px;">11/19/2021</div>
<div class="t" style="left:1741px;top:501.84px;font-size:12px;line-height:14px;color:#006096;font-weight:normal;letter-spacing:-0.1px;">SO-0048649</div>
<div class="t" style="right:5px;top:502.02px;font-size:11.5px;line-height:14px;color:#222;font-weight:normal;letter-spacing:-0.2px;text-align:right">$544.38</div>
<div class="a" style="left:1730px;top:440px;width:111px;height:90px;border:5px solid #f25a4b;box-shadow:2px 2px 3px rgba(0,0,0,0.45), inset 2px 2px 3px rgba(0,0,0,0.6)"></div>
<div class="a" style="left:1661px;top:917px;width:259px;height:1px;background:#e6e6e6;"></div>
<div class="t" style="left:1678.5px;top:931.08px;font-size:11.3px;line-height:14px;color:#222;font-weight:bold;letter-spacing:0px;">Open Balance</div>
<div class="t" style="right:16.5px;top:952.84px;font-size:12.3px;line-height:15px;color:#222;font-weight:normal;letter-spacing:-0.2px;text-align:right">$2.00</div>
<div class="t" style="left:1683px;top:968.34px;font-size:12px;line-height:14px;color:#006096;font-weight:normal;letter-spacing:-0.1px;">Currency:</div>
<div class="a" style="left:1661px;top:987px;width:243px;height:1px;background:#e6e6e6;"></div>
<div class="t" style="left:1679px;top:996.78px;font-size:11.3px;line-height:14px;color:#222;font-weight:bold;letter-spacing:0px;">Total Applied:</div>
<div class="t" style="right:16.5px;top:995.94px;font-size:12.3px;line-height:15px;color:#222;font-weight:normal;letter-spacing:-0.2px;text-align:right">$0.00</div>
<div class="t" style="left:1679px;top:1011.78px;font-size:11.3px;line-height:14px;color:#222;font-weight:bold;letter-spacing:0px;">Amount Due:</div>
<div class="t" style="right:16.5px;top:1010.94px;font-size:12.3px;line-height:15px;color:#f00;font-weight:bold;letter-spacing:-0.1px;text-align:right">$2.00</div>
<div class="a" style="left:419px;top:982px;width:11px;height:1px;background:#e6e6e6;"></div>
<div class="a" style="left:427px;top:999px;width:6px;height:25px;background:#006096;border-radius:2px"></div>
<div class="a" style="left:427px;top:397px;width:1px;height:538px;background:#abc0d6;"></div>
<div class="a" style="left:427px;top:934px;width:4px;height:1px;background:#abc0d6;"></div>
<svg style="left:427px;top:950px" width="16" height="16" viewBox="0 0 16 16"><circle cx="8" cy="8" r="8" fill="#c8c8c8"/></svg>
<!-- MODAL -->
<div class="a" style="left:430px;top:397px;width:1280px;height:643px;background:#ffffff;"></div>
<div class="a" style="left:430px;top:397px;width:1280px;height:36px;background:#404040;"></div>
<div class="a" style="left:430px;top:397px;width:1px;height:643px;background:#3a3a3a;"></div>
<div class="a" style="left:1709px;top:397px;width:1px;height:643px;background:#3a3a3a;"></div>
<svg style="left:449px;top:406px" width="19" height="19" viewBox="0 0 19 19"><circle cx="9.5" cy="9.5" r="9" fill="#fff"/><path d="M9 1.3 A8.2 8.2 0 0 0 9 17.7 Z" fill="#0e5e9e"/><rect x="6" y="5.9" width="6" height="1.2" fill="#cfe0ee"/><rect x="4.8" y="8.4" width="8.5" height="2" fill="#cfe0ee"/><rect x="6" y="11.7" width="6" height="1.2" fill="#cfe0ee"/><rect x="9" y="5.9" width="3" height="1.2" fill="#0e5e9e"/><rect x="9" y="8.4" width="4.3" height="2" fill="#0e5e9e"/><rect x="9" y="11.7" width="3" height="1.2" fill="#0e5e9e"/></svg>
<div class="t" style="left:485px;top:408.62px;font-size:13.5px;line-height:16px;color:#fff;font-weight:normal;letter-spacing:-0.1px;">Purchase Order</div>
<svg style="left:1621px;top:410px" width="11" height="11" viewBox="0 0 11 11"><rect x="0.75" y="0.75" width="9.5" height="9.5" fill="none" stroke="#e0e0e0" stroke-width="1.3"/></svg>
<svg style="left:1676px;top:410px" width="10" height="10" viewBox="0 0 10 10"><path d="M0.5 0.5L9.5 9.5M9.5 0.5L0.5 9.5" stroke="#e0e0e0" stroke-width="1.2"/></svg>
<div class="a" style="left:431px;top:433px;width:150px;height:607px;background:#e5e5e5;"></div>
<div class="a" style="left:431px;top:471px;width:148px;height:38px;background:#fff;"></div>
<div class="a" style="left:579px;top:471px;width:2px;height:38px;background:#006096;"></div>
<svg style="left:438px;top:443px" width="20" height="20" viewBox="0 0 20 20"><circle cx="10" cy="10" r="8.8" fill="none" stroke="#006096" stroke-width="2"/><circle cx="10" cy="5.8" r="1.3" fill="#006096"/><rect x="8.9" y="8" width="2.2" height="7" fill="#006096"/></svg>
<div class="t" style="left:471px;top:446.67px;font-size:12.5px;line-height:15px;color:#006096;font-weight:normal;letter-spacing:-0.1px;-webkit-text-stroke:0.25px #006096">Info</div>
<svg style="left:438px;top:481px" width="21" height="20" viewBox="0 0 21 20"><g fill="#006096"><rect x="0" y="0.2" width="3" height="2.8"/><rect x="6" y="0.2" width="15" height="2.8"/><rect x="0" y="5.9" width="3" height="2.8"/><rect x="6" y="5.9" width="15" height="2.8"/><rect x="0" y="11.5" width="3" height="2.8"/><rect x="6" y="11.5" width="15" height="2.8"/><rect x="0" y="17.1" width="3" height="2.8"/><rect x="6" y="17.1" width="15" height="2.8"/></g></svg>
<div class="t" style="left:471px;top:484.67px;font-size:12.5px;line-height:15px;color:#006096;font-weight:normal;letter-spacing:-0.5px;-webkit-text-stroke:0.25px #006096">Purchase order</div>
<svg style="left:438px;top:519px" width="20" height="20" viewBox="0 0 20 20"><circle cx="10" cy="10" r="8.8" fill="none" stroke="#006096" stroke-width="2"/><path d="M12.9 6.9Q12.2 5.7 10 5.7Q7.3 5.7 7.3 7.8Q7.3 9.4 10 9.9Q12.8 10.4 12.8 12.3Q12.8 14.4 10 14.4Q7.7 14.4 7 13" fill="none" stroke="#006096" stroke-width="1.6"/><path d="M10 3.9V5.8M10 14.3V16.2" stroke="#006096" stroke-width="1.6"/></svg>
<div class="t" style="left:471px;top:522.67px;font-size:12.5px;line-height:15px;color:#006096;font-weight:normal;letter-spacing:-0.6px;-webkit-text-stroke:0.25px #006096">Payments</div>
<div class="a" style="left:581px;top:433px;width:1128px;height:38px;background:#eeeeee;"></div>
<div class="a" style="left:1449px;top:433px;width:1px;height:38px;background:#d0d0d0;"></div>
<div class="a" style="left:1449px;top:471px;width:1px;height:569px;background:#e4e4e4;"></div>
<div class="t" style="left:589px;top:447.32px;font-size:11.5px;line-height:14px;color:#006096;font-weight:normal;letter-spacing:-0.2px;">Vendor:</div>
<div class="a" style="left:633px;top:441px;width:140px;height:25px;background:#fff;border-radius:2px"></div>
<div class="t" style="left:637px;top:446.24px;font-size:12.3px;line-height:15px;color:#555;font-weight:normal;letter-spacing:-0.9px;">123131</div>
<svg style="left:757px;top:450px" width="10" height="7" viewBox="0 0 10 7"><path d="M0 0H10L5.0 7Z" fill="#bdbdbd"/></svg>
<div class="t" style="left:793px;top:447.99px;font-size:11px;line-height:13px;color:#555;font-weight:normal;letter-spacing:0.0px;">Vendor email:</div>
<div class="a" style="left:867px;top:441px;width:140px;height:25px;background:#fff;border-radius:2px"></div>
<div class="t" style="left:872px;top:447.34px;font-size:12px;line-height:14px;color:#b5b5b5;font-weight:normal;letter-spacing:-0.2px;">Vendor email</div>
<svg style="left:989px;top:450px" width="10" height="7" viewBox="0 0 10 7"><path d="M0 0H10L5.0 7Z" fill="#bdbdbd"/></svg>
<div class="t" style="left:1027px;top:447.99px;font-size:11px;line-height:13px;color:#555;font-weight:normal;letter-spacing:-0.2px;">Payment Terms:</div>
<div class="a" style="left:1109px;top:441px;width:140px;height:25px;background:#fff;border-radius:2px"></div>
<div class="t" style="left:1114px;top:447.34px;font-size:12px;line-height:14px;color:#b5b5b5;font-weight:normal;letter-spacing:-0.2px;">Terms</div>
<svg style="left:1235px;top:450px" width="10" height="7" viewBox="0 0 10 7"><path d="M0 0H10L5.0 7Z" fill="#bdbdbd"/></svg>
<div class="t" style="left:1310px;top:447.99px;font-size:11px;line-height:13px;color:#555;font-weight:normal;letter-spacing:0.0px;">PO #:</div>
<div class="a" style="left:1342px;top:441px;width:98px;height:25px;background:#fff;border-radius:2px"></div>
<div class="t" style="left:1349px;top:447.34px;font-size:12px;line-height:14px;color:#222;font-weight:normal;letter-spacing:-0.2px;">PO-0014245-D</div>
<svg style="left:1504px;top:439px" width="200" height="30" viewBox="0 0 200 30"><g fill="none" stroke="#006096" stroke-width="2.1"><path d="M17.25 8.34A6.3 6.3 0 0 0 7.8 14"/><path d="M10.95 19.26A6.3 6.3 0 0 0 20.4 13.6"/></g><path d="M4.6 13.6H11.1L7.85 17.2Z" fill="#006096"/><path d="M17.1 13.9H23.6L20.35 10.3Z" fill="#006096"/><path d="M55.45 13.55L47.65 21.35A4.35 4.35 0 0 1 41.5 15.2L50.15 6.55A3 3 0 0 1 54.4 10.8L46.85 18.35A1.6 1.6 0 0 1 44.6 16.1L51.05 9.65" fill="none" stroke="#006096" stroke-width="1.5" stroke-linecap="round"/><rect x="84.9" y="5.9" width="10.4" height="3.2" fill="#006096"/><rect x="84.9" y="9.1" width="10.4" height="1" fill="#7fa6c8"/><path d="M82.5 10.1H97.4Q98.9 10.1 98.9 11.6V18.9H81V11.6Q81 10.1 82.5 10.1Z" fill="#006096"/><circle cx="96.3" cy="13" r="0.9" fill="#eee"/><rect x="84.9" y="15.3" width="10.4" height="6.5" fill="#006096"/><rect x="86.5" y="16" width="7.2" height="4.2" fill="#eee"/><path d="M102.5 11.1H110.3L106.4 15.6Z" fill="#006096"/><rect x="124.9" y="6.8" width="17.9" height="14.4" rx="1.8" fill="#006096"/><path d="M127.2 9.1L134 14.3L140.9 9.1" fill="none" stroke="#eee" stroke-width="1.3"/><path d="M146.4 11.1H154.2L150.3 15.6Z" fill="#006096"/><path d="M172.8 4.9H177.7L184.8 11.7V21.4Q184.8 23.1 183.1 23.1H172.8Q171.1 23.1 171.1 21.4V6.6Q171.1 4.9 172.8 4.9Z" fill="#006096"/><path d="M179 6.8L182.9 10.7H179Z" fill="#eee"/><rect x="174.1" y="14" width="7.8" height="1.9" fill="#eee"/><rect x="174.1" y="17.9" width="7.8" height="2" fill="#eee"/><path d="M190.7 11.1H198.2L194.5 15.6Z" fill="#006096"/></svg>
<div class="t" style="left:1566.5px;top:446.04px;font-size:10px;line-height:12px;color:#e60000;font-weight:normal;letter-spacing:0.0px;">0</div>
<div class="t" style="left:589px;top:483.93px;font-size:23px;line-height:28px;color:#111;font-weight:normal;letter-spacing:0.0px;">Purchase Order</div>
<div class="a" style="left:758px;top:483.5px;width:53px;height:27.7px;background:#737373;border-radius:3px"></div>
<div class="t" style="left:766px;top:486.91px;font-size:17px;line-height:20px;color:#fff;font-weight:normal;letter-spacing:0px;">Draft</div>
<svg style="left:1411.6px;top:485.4px" width="19" height="19" viewBox="0 0 19 19"><g fill="#006096"><circle cx="9.5" cy="9.5" r="6.7"/><path d="M7.3 0.5999999999999996H11.7L12.1 4.5H6.9Z M7.3 18.4H11.7L12.1 14.5H6.9Z" transform="rotate(0 9.5 9.5)"/><path d="M7.3 0.5999999999999996H11.7L12.1 4.5H6.9Z M7.3 18.4H11.7L12.1 14.5H6.9Z" transform="rotate(60 9.5 9.5)"/><path d="M7.3 0.5999999999999996H11.7L12.1 4.5H6.9Z M7.3 18.4H11.7L12.1 14.5H6.9Z" transform="rotate(120 9.5 9.5)"/></g><circle cx="9.5" cy="9.5" r="3.3" fill="#fff"/></svg>
<div class="a" style="left:589px;top:531px;width:150px;height:25px;background:#f3f3f3;border-radius:2px"></div>
<div class="t" style="left:594px;top:537.34px;font-size:12px;line-height:14px;color:#b0b0b0;font-weight:normal;letter-spacing:-0.2px;">Search</div>
<svg style="left:742px;top:539px" width="16" height="16" viewBox="0 0 16 16"><circle cx="8" cy="8" r="8" fill="#006096"/><path d="M5 5L11 11M11 5L5 11" stroke="#fff" stroke-width="1.6"/></svg>
<div class="a" style="left:1231px;top:535.5px;width:79px;height:24px;background:#e9e9e9;"></div>
<div class="t" style="left:1246px;top:541.02px;font-size:11.5px;line-height:14px;color:#006096;font-weight:normal;letter-spacing:-0.2px;">ACTIONS</div>
<div class="a" style="left:1312px;top:535.5px;width:21px;height:24px;background:#e9e9e9;"></div>
<svg style="left:1318px;top:545.5px" width="9" height="5" viewBox="0 0 9 5"><path d="M0 0H9L4.5 5Z" fill="#006096"/></svg>
<div class="a" style="left:1343px;top:535.5px;width:75px;height:24px;background:#e9e9e9;"></div>
<div class="t" style="left:1362px;top:541.02px;font-size:11.5px;line-height:14px;color:#006096;font-weight:normal;letter-spacing:-0.2px;">DELETE</div>
<div class="a" style="left:1420px;top:535.5px;width:21px;height:24px;background:#e9e9e9;"></div>
<svg style="left:1426px;top:545.5px" width="9" height="5" viewBox="0 0 9 5"><path d="M0 0H9L4.5 5Z" fill="#006096"/></svg>
<div class="a" style="left:589px;top:568px;width:852px;height:472px;border:1px solid #abc0d6;border-bottom:none;background:#fff"></div>
<div class="a" style="left:590px;top:663px;width:836px;height:29px;background:#ebf2f7;"></div>
<div class="a" style="left:590px;top:721px;width:836px;height:29px;background:#ebf2f7;"></div>
<div class="a" style="left:590px;top:779px;width:836px;height:29px;background:#ebf2f7;"></div>
<div class="a" style="left:590px;top:837px;width:836px;height:29px;background:#ebf2f7;"></div>
<div class="a" style="left:590px;top:895px;width:836px;height:29px;background:#ebf2f7;"></div>
<div class="a" style="left:590px;top:953px;width:836px;height:29px;background:#ebf2f7;"></div>
<div class="a" style="left:590px;top:1011px;width:836px;height:14px;background:#ebf2f7;"></div>
<div class="a" style="left:619px;top:569px;width:1px;height:456px;background:#e6e8ea;"></div>
<div class="a" style="left:659px;top:569px;width:1px;height:456px;background:#e6e8ea;"></div>
<div class="a" style="left:739px;top:569px;width:1px;height:456px;background:#e6e8ea;"></div>
<div class="a" style="left:852px;top:569px;width:1px;height:456px;background:#e6e8ea;"></div>
<div class="a" style="left:922px;top:569px;width:1px;height:456px;background:#e6e8ea;"></div>
<div class="a" style="left:992px;top:569px;width:1px;height:456px;background:#e6e8ea;"></div>
<div class="a" style="left:1062px;top:569px;width:1px;height:456px;background:#e6e8ea;"></div>
<div class="a" style="left:1122px;top:569px;width:1px;height:456px;background:#e6e8ea;"></div>
<div class="a" style="left:1202px;top:569px;width:1px;height:456px;background:#e6e8ea;"></div>
<div class="a" style="left:1262px;top:569px;width:1px;height:456px;background:#e6e8ea;"></div>
<div class="a" style="left:1342px;top:569px;width:1px;height:456px;background:#e6e8ea;"></div>
<div class="a" style="left:1414px;top:569px;width:1px;height:456px;background:#e6e8ea;"></div>
<div class="a" style="left:590px;top:600px;width:836px;height:2px;background:#006096;"></div>
<div class="a" style="left:590px;top:632px;width:836px;height:2px;background:#006096;"></div>
<div class="a" style="left:1430px;top:620px;width:7px;height:208px;background:#f2f2f2;"></div>
<svg style="left:1429.5px;top:607px" width="8" height="5" viewBox="0 0 8 5"><path d="M0.5 4.5L4 1L7.5 4.5" fill="none" stroke="#e6e6e6" stroke-width="1"/></svg>
<div class="a" style="left:590px;top:1025px;width:836px;height:15px;background:#fff;"></div>
<div class="a" style="left:604px;top:1030px;width:656px;height:6px;background:#efefef;"></div>
<svg style="left:596px;top:576px" width="18" height="18" viewBox="0 0 18 18"><rect x="1" y="1" width="16" height="16" rx="2.5" fill="#fff" stroke="#006096" stroke-width="2"/></svg>
<div class="t" style="left:625px;top:579.34px;font-size:12px;line-height:14px;color:#222;font-weight:normal;letter-spacing:0.0px;">#</div>
<div class="t" style="left:665px;top:579.34px;font-size:12px;line-height:14px;color:#222;font-weight:normal;letter-spacing:0.0px;">Item</div>
<div class="t" style="left:745px;top:579.34px;font-size:12px;line-height:14px;color:#222;font-weight:normal;letter-spacing:0.0px;">Description</div>
<div class="t" style="left:858px;top:579.34px;font-size:12px;line-height:14px;color:#222;font-weight:normal;letter-spacing:-0.5px;">QTY</div>
<div class="t" style="left:928px;top:579.34px;font-size:12px;line-height:14px;color:#222;font-weight:normal;letter-spacing:-0.2px;">In Stock</div>
<div class="t" style="left:998px;top:571.54px;font-size:12px;line-height:14px;color:#222;font-weight:normal;letter-spacing:-0.2px;">Incoming</div>
<div class="t" style="left:998px;top:585.94px;font-size:12px;line-height:14px;color:#222;font-weight:normal;letter-spacing:-0.2px;">PO</div>
<div class="t" style="left:1068px;top:571.54px;font-size:12px;line-height:14px;color:#222;font-weight:normal;letter-spacing:-0.2px;">Qty Per</div>
<div class="t" style="left:1068px;top:585.94px;font-size:12px;line-height:14px;color:#222;font-weight:normal;letter-spacing:-0.2px;">Carton</div>
<div class="t" style="left:1128px;top:571.54px;font-size:12px;line-height:14px;color:#222;font-weight:normal;letter-spacing:-0.2px;">Num. of</div>
<div class="t" style="left:1128px;top:585.94px;font-size:12px;line-height:14px;color:#222;font-weight:normal;letter-spacing:-0.2px;">Cartons</div>
<div class="t" style="left:1208px;top:571.54px;font-size:12px;line-height:14px;color:#222;font-weight:normal;letter-spacing:-0.2px;">Carton</div>
<div class="t" style="left:1208px;top:585.94px;font-size:12px;line-height:14px;color:#222;font-weight:normal;letter-spacing:-0.2px;">Per Pallet</div>
<div class="t" style="left:1268px;top:571.54px;font-size:12px;line-height:14px;color:#222;font-weight:normal;letter-spacing:-0.2px;">Num. of</div>
<div class="t" style="left:1268px;top:585.94px;font-size:12px;line-height:14px;color:#222;font-weight:normal;letter-spacing:-0.2px;">Pallets</div>
<div class="t" style="left:1348px;top:579.34px;font-size:12px;line-height:14px;color:#222;font-weight:normal;letter-spacing:0.0px;">Price</div>
<div class="t" style="left:1418px;top:579.34px;font-size:12px;line-height:14px;color:#222;font-weight:normal;letter-spacing:0.0px;">A</div>
<svg style="left:596px;top:608px" width="18" height="18" viewBox="0 0 18 18"><rect x="1" y="1" width="16" height="16" rx="2.5" fill="#fff" stroke="#006096" stroke-width="2"/></svg>
<div class="t" style="left:626px;top:610.84px;font-size:12px;line-height:14px;color:#222;font-weight:normal;letter-spacing:0.0px;">1</div>
<svg style="left:668px;top:611.7px" width="15" height="12" viewBox="0 0 15 12"><g fill="#006096"><rect x="0" y="0" width="9" height="2.6" rx="1.1"/><rect x="2.1" y="4.4" width="9.7" height="2.6" rx="1.1"/><rect x="5" y="8.6" width="9.6" height="2.6" rx="1.1"/></g></svg>
<div class="a" style="left:688px;top:608px;width:51px;height:18px;overflow:hidden">
<div class="t" style="left:0px;top:2.84px;font-size:12px;line-height:14px;color:#222;font-weight:normal;letter-spacing:-0.2px;">1/2greeclarks</div>
</div>
<div class="t" style="left:748px;top:610.84px;font-size:12px;line-height:14px;color:#111;font-weight:normal;letter-spacing:-0.45px;">0.5 green clark...</div>
<svg style="left:833px;top:610px" width="14" height="14" viewBox="0 0 14 14"><path d="M0 14V11L8.5 2.5L11.5 5.5L3 14Z" fill="#006096"/><path d="M9.7 1.3L11 0L14 3L12.7 4.3Z" fill="#006096"/></svg>
<div class="t" style="left:860px;top:611.34px;font-size:12px;line-height:14px;color:#222;font-weight:normal;letter-spacing:0.0px;">5</div>
<div class="a" style="left:894px;top:607px;width:24px;height:20px;background:#006096;border-radius:1.5px"></div>
<div class="t" style="left:902px;top:610.17px;font-size:12.5px;line-height:15px;color:#fff;font-weight:normal;letter-spacing:0.0px;">S</div>
<div class="t" style="left:933px;top:611.84px;font-size:12px;line-height:14px;color:#006096;font-weight:normal;letter-spacing:0.0px;">0</div>
<div class="t" style="left:998px;top:611.84px;font-size:12px;line-height:14px;color:#006096;font-weight:normal;letter-spacing:0px;">5 / 0</div>
<svg style="left:1030px;top:611.5px" width="12" height="12" viewBox="0 0 12 12"><circle cx="6" cy="6" r="6" fill="#d62b2b"/><rect x="5.1" y="2.4" width="1.8" height="4.6" fill="#fff"/><rect x="5.1" y="8" width="1.8" height="1.8" fill="#fff"/></svg>
<div class="t" style="left:1350px;top:612.34px;font-size:12px;line-height:14px;color:#111;font-weight:normal;letter-spacing:-0.3px;">0.00</div>
<svg style="left:1403.6px;top:608.1px" width="5" height="18" viewBox="0 0 5 18"><g fill="#006096"><rect x="0" y="0" width="4.4" height="4.4"/><rect x="0" y="6.8" width="4.4" height="4.4"/><rect x="0" y="13.5" width="4.4" height="4.4"/></g></svg>
<div class="t" style="left:1420px;top:611.84px;font-size:12px;line-height:14px;color:#111;font-weight:normal;letter-spacing:0.0px;">0</div>
<div class="a" style="left:0;top:0;width:1920px;height:1025px;overflow:hidden">
<svg style="left:596px;top:639px" width="18" height="18" viewBox="0 0 18 18"><rect x="1" y="1" width="16" height="16" rx="2.5" fill="#fff" stroke="#006096" stroke-width="2"/></svg>
<svg style="left:725px;top:645.5px" width="10" height="7" viewBox="0 0 10 7"><path d="M0 0H10L5.0 7Z" fill="#c4c4c4"/></svg>
<svg style="left:596px;top:668px" width="18" height="18" viewBox="0 0 18 18"><rect x="1" y="1" width="16" height="16" rx="2.5" fill="#fff" stroke="#006096" stroke-width="2"/></svg>
<svg style="left:725px;top:674.5px" width="10" height="7" viewBox="0 0 10 7"><path d="M0 0H10L5.0 7Z" fill="#c4c4c4"/></svg>
<svg style="left:596px;top:697px" width="18" height="18" viewBox="0 0 18 18"><rect x="1" y="1" width="16" height="16" rx="2.5" fill="#fff" stroke="#006096" stroke-width="2"/></svg>
<svg style="left:725px;top:703.5px" width="10" height="7" viewBox="0 0 10 7"><path d="M0 0H10L5.0 7Z" fill="#c4c4c4"/></svg>
<svg style="left:596px;top:726px" width="18" height="18" viewBox="0 0 18 18"><rect x="1" y="1" width="16" height="16" rx="2.5" fill="#fff" stroke="#006096" stroke-width="2"/></svg>
<svg style="left:725px;top:732.5px" width="10" height="7" viewBox="0 0 10 7"><path d="M0 0H10L5.0 7Z" fill="#c4c4c4"/></svg>
<svg style="left:596px;top:755px" width="18" height="18" viewBox="0 0 18 18"><rect x="1" y="1" width="16" height="16" rx="2.5" fill="#fff" stroke="#006096" stroke-width="2"/></svg>
<svg style="left:725px;top:761.5px" width="10" height="7" viewBox="0 0 10 7"><path d="M0 0H10L5.0 7Z" fill="#c4c4c4"/></svg>
<svg style="left:596px;top:784px" width="18" height="18" viewBox="0 0 18 18"><rect x="1" y="1" width="16" height="16" rx="2.5" fill="#fff" stroke="#006096" stroke-width="2"/></svg>
<svg style="left:725px;top:790.5px" width="10" height="7" viewBox="0 0 10 7"><path d="M0 0H10L5.0 7Z" fill="#c4c4c4"/></svg>
<svg style="left:596px;top:813px" width="18" height="18" viewBox="0 0 18 18"><rect x="1" y="1" width="16" height="16" rx="2.5" fill="#fff" stroke="#006096" stroke-width="2"/></svg>
<svg style="left:725px;top:819.5px" width="10" height="7" viewBox="0 0 10 7"><path d="M0 0H10L5.0 7Z" fill="#c4c4c4"/></svg>
<svg style="left:596px;top:842px" width="18" height="18" viewBox="0 0 18 18"><rect x="1" y="1" width="16" height="16" rx="2.5" fill="#fff" stroke="#006096" stroke-width="2"/></svg>
<svg style="left:725px;top:848.5px" width="10" height="7" viewBox="0 0 10 7"><path d="M0 0H10L5.0 7Z" fill="#c4c4c4"/></svg>
<svg style="left:596px;top:871px" width="18" height="18" viewBox="0 0 18 18"><rect x="1" y="1" width="16" height="16" rx="2.5" fill="#fff" stroke="#006096" stroke-width="2"/></svg>
<svg style="left:725px;top:877.5px" width="10" height="7" viewBox="0 0 10 7"><path d="M0 0H10L5.0 7Z" fill="#c4c4c4"/></svg>
<svg style="left:596px;top:900px" width="18" height="18" viewBox="0 0 18 18"><rect x="1" y="1" width="16" height="16" rx="2.5" fill="#fff" stroke="#006096" stroke-width="2"/></svg>
<svg style="left:725px;top:906.5px" width="10" height="7" viewBox="0 0 10 7"><path d="M0 0H10L5.0 7Z" fill="#c4c4c4"/></svg>
<svg style="left:596px;top:929px" width="18" height="18" viewBox="0 0 18 18"><rect x="1" y="1" width="16" height="16" rx="2.5" fill="#fff" stroke="#006096" stroke-width="2"/></svg>
<svg style="left:725px;top:935.5px" width="10" height="7" viewBox="0 0 10 7"><path d="M0 0H10L5.0 7Z" fill="#c4c4c4"/></svg>
<svg style="left:596px;top:958px" width="18" height="18" viewBox="0 0 18 18"><rect x="1" y="1" width="16" height="16" rx="2.5" fill="#fff" stroke="#006096" stroke-width="2"/></svg>
<svg style="left:725px;top:964.5px" width="10" height="7" viewBox="0 0 10 7"><path d="M0 0H10L5.0 7Z" fill="#c4c4c4"/></svg>
<svg style="left:596px;top:987px" width="18" height="18" viewBox="0 0 18 18"><rect x="1" y="1" width="16" height="16" rx="2.5" fill="#fff" stroke="#006096" stroke-width="2"/></svg>
<svg style="left:725px;top:993.5px" width="10" height="7" viewBox="0 0 10 7"><path d="M0 0H10L5.0 7Z" fill="#c4c4c4"/></svg>
<svg style="left:596px;top:1016px" width="18" height="18" viewBox="0 0 18 18"><rect x="1" y="1" width="16" height="16" rx="2.5" fill="#fff" stroke="#006096" stroke-width="2"/></svg>
<svg style="left:725px;top:1022.5px" width="10" height="7" viewBox="0 0 10 7"><path d="M0 0H10L5.0 7Z" fill="#c4c4c4"/></svg>
</div>
<div class="t" style="left:1452px;top:484.34px;font-size:12px;line-height:14px;color:#333;font-weight:normal;letter-spacing:-0.45px;-webkit-text-stroke:0.2px #333">TRANSACTION</div>
<div class="t" style="left:1556px;top:484.34px;font-size:12px;line-height:14px;color:#333;font-weight:normal;letter-spacing:-0.3px;-webkit-text-stroke:0.2px #333">VENDOR</div>
<div class="t" style="left:1651px;top:484.34px;font-size:12px;line-height:14px;color:#333;font-weight:normal;letter-spacing:-0.3px;-webkit-text-stroke:0.2px #333">LOGS</div>
<div class="a" style="left:1450px;top:509px;width:259px;height:1px;background:#e6e6e6;"></div>
<div class="a" style="left:1536.5px;top:507.4px;width:86px;height:2.6px;background:#006096;"></div>
<div class="t" style="left:1466px;top:527.50px;font-size:13px;line-height:16px;color:#333;font-weight:normal;letter-spacing:-0.2px;-webkit-text-stroke:0.2px #333">SUMMARY</div>
<div class="t" style="left:1466px;top:557.69px;font-size:11px;line-height:13px;color:#777;font-weight:normal;letter-spacing:0.25px;">Phone Number</div>
<div class="t" style="left:1466px;top:576.69px;font-size:11px;line-height:13px;color:#777;font-weight:normal;letter-spacing:0.25px;">Account Number</div>
<div class="t" style="left:1466px;top:595.69px;font-size:11px;line-height:13px;color:#777;font-weight:normal;letter-spacing:-0.1px;">Payment Terms Type</div>
<div class="a" style="left:1450px;top:626px;width:259px;height:2px;background:#ececec;"></div>
<div class="t" style="left:1463px;top:642.27px;font-size:12.2px;line-height:15px;color:#333;font-weight:normal;letter-spacing:-0.1px;-webkit-text-stroke:0.2px #333">RECENT TRANSACTION</div>
<div class="t" style="left:1469px;top:676.69px;font-size:11px;line-height:13px;color:#777;font-weight:normal;letter-spacing:-0.05px;">12/10/2021</div>
<div class="t" style="left:1532px;top:674.84px;font-size:12px;line-height:14px;color:#006096;font-weight:normal;letter-spacing:-0.1px;">PO-0014237</div>
<div class="t" style="right:222px;top:675.02px;font-size:11.5px;line-height:14px;color:#222;font-weight:normal;letter-spacing:-0.3px;text-align:right">$-3.00</div>
<div class="t" style="left:1469px;top:697.69px;font-size:11px;line-height:13px;color:#777;font-weight:normal;letter-spacing:-0.05px;">12/10/2021</div>
<div class="t" style="left:1532px;top:695.84px;font-size:12px;line-height:14px;color:#006096;font-weight:normal;letter-spacing:-0.1px;">PO-0014236</div>
<div class="t" style="right:222px;top:696.02px;font-size:11.5px;line-height:14px;color:#222;font-weight:normal;letter-spacing:-0.3px;text-align:right">$-3.00</div>
<div class="t" style="left:1469px;top:718.69px;font-size:11px;line-height:13px;color:#777;font-weight:normal;letter-spacing:-0.05px;">12/10/2021</div>
<div class="t" style="left:1532px;top:716.84px;font-size:12px;line-height:14px;color:#006096;font-weight:normal;letter-spacing:-0.1px;">PO-0014235</div>
<div class="t" style="right:222px;top:717.02px;font-size:11.5px;line-height:14px;color:#222;font-weight:normal;letter-spacing:-0.3px;text-align:right">$-30.00</div>
<div class="t" style="left:1469px;top:739.69px;font-size:11px;line-height:13px;color:#777;font-weight:normal;letter-spacing:-0.05px;">12/10/2021</div>
<div class="t" style="left:1532px;top:737.84px;font-size:12px;line-height:14px;color:#006096;font-weight:normal;letter-spacing:-0.1px;">PO-0014234</div>
<div class="t" style="right:222px;top:738.02px;font-size:11.5px;line-height:14px;color:#222;font-weight:normal;letter-spacing:-0.3px;text-align:right">$-3.00</div>
<div class="t" style="left:1469px;top:760.69px;font-size:11px;line-height:13px;color:#777;font-weight:normal;letter-spacing:-0.05px;">11/29/2021</div>
<div class="t" style="left:1532px;top:758.84px;font-size:12px;line-height:14px;color:#006096;font-weight:normal;letter-spacing:-0.1px;">VC-0000179</div>
<div class="t" style="right:222px;top:759.02px;font-size:11.5px;line-height:14px;color:#222;font-weight:normal;letter-spacing:-0.3px;text-align:right">$0.00</div>
<div class="t" style="left:1469px;top:781.69px;font-size:11px;line-height:13px;color:#777;font-weight:normal;letter-spacing:-0.05px;">11/26/2021</div>
<div class="t" style="left:1532px;top:779.84px;font-size:12px;line-height:14px;color:#006096;font-weight:normal;letter-spacing:-0.1px;">PO-0014205</div>
<div class="t" style="right:222px;top:780.02px;font-size:11.5px;line-height:14px;color:#222;font-weight:normal;letter-spacing:-0.3px;text-align:right">$-5.00</div>
<div class="t" style="left:1469px;top:802.69px;font-size:11px;line-height:13px;color:#777;font-weight:normal;letter-spacing:-0.05px;">11/26/2021</div>
<div class="t" style="left:1532px;top:800.84px;font-size:12px;line-height:14px;color:#006096;font-weight:normal;letter-spacing:-0.1px;">IRC-0011589-D</div>
<div class="t" style="right:222px;top:801.02px;font-size:11.5px;line-height:14px;color:#222;font-weight:normal;letter-spacing:-0.3px;text-align:right">$-23.00</div>
<div class="t" style="left:1469px;top:823.69px;font-size:11px;line-height:13px;color:#777;font-weight:normal;letter-spacing:-0.05px;">11/26/2021</div>
<div class="t" style="left:1532px;top:821.84px;font-size:12px;line-height:14px;color:#006096;font-weight:normal;letter-spacing:-0.1px;">IRC-0011586-D</div>
<div class="t" style="right:222px;top:822.02px;font-size:11.5px;line-height:14px;color:#222;font-weight:normal;letter-spacing:-0.3px;text-align:right">$0.00</div>
<div class="t" style="left:1469px;top:844.69px;font-size:11px;line-height:13px;color:#777;font-weight:normal;letter-spacing:-0.05px;">11/26/2021</div>
<div class="t" style="left:1532px;top:842.84px;font-size:12px;line-height:14px;color:#006096;font-weight:normal;letter-spacing:-0.1px;">VC-0000178</div>
<div class="t" style="right:222px;top:843.02px;font-size:11.5px;line-height:14px;color:#222;font-weight:normal;letter-spacing:-0.3px;text-align:right">$-23.00</div>
<div class="t" style="left:1469px;top:865.69px;font-size:11px;line-height:13px;color:#777;font-weight:normal;letter-spacing:-0.05px;">11/19/2021</div>
<div class="t" style="left:1532px;top:863.84px;font-size:12px;line-height:14px;color:#006096;font-weight:normal;letter-spacing:-0.1px;">B-0014177</div>
<div class="t" style="right:222px;top:864.02px;font-size:11.5px;line-height:14px;color:#222;font-weight:normal;letter-spacing:-0.3px;text-align:right">$-500.00</div>
<div class="t" style="left:1469px;top:886.69px;font-size:11px;line-height:13px;color:#777;font-weight:normal;letter-spacing:-0.05px;">11/19/2021</div>
<div class="t" style="left:1532px;top:884.84px;font-size:12px;line-height:14px;color:#006096;font-weight:normal;letter-spacing:-0.1px;">PO-0014177</div>
<div class="t" style="right:222px;top:885.02px;font-size:11.5px;line-height:14px;color:#222;font-weight:normal;letter-spacing:-0.3px;text-align:right">$-500.00</div>
<div class="t" style="left:1469px;top:907.69px;font-size:11px;line-height:13px;color:#777;font-weight:normal;letter-spacing:-0.05px;">11/19/2021</div>
<div class="t" style="left:1532px;top:905.84px;font-size:12px;line-height:14px;color:#006096;font-weight:normal;letter-spacing:-0.1px;">B-0014176</div>
<div class="t" style="right:222px;top:906.02px;font-size:11.5px;line-height:14px;color:#222;font-weight:normal;letter-spacing:-0.3px;text-align:right">$-100.00</div>
<div class="t" style="left:1469px;top:928.69px;font-size:11px;line-height:13px;color:#777;font-weight:normal;letter-spacing:-0.05px;">11/19/2021</div>
<div class="t" style="left:1532px;top:926.84px;font-size:12px;line-height:14px;color:#006096;font-weight:normal;letter-spacing:-0.1px;">PO-0014176</div>
<div class="t" style="right:222px;top:927.02px;font-size:11.5px;line-height:14px;color:#222;font-weight:normal;letter-spacing:-0.3px;text-align:right">$-100.00</div>
<div class="t" style="left:1469px;top:949.69px;font-size:11px;line-height:13px;color:#777;font-weight:normal;letter-spacing:-0.05px;">11/19/2021</div>
<div class="t" style="left:1532px;top:947.84px;font-size:12px;line-height:14px;color:#006096;font-weight:normal;letter-spacing:-0.1px;">IRC-0014177</div>
<div class="t" style="right:222px;top:948.02px;font-size:11.5px;line-height:14px;color:#222;font-weight:normal;letter-spacing:-0.3px;text-align:right">$500.00</div>
<div class="t" style="left:1469px;top:970.69px;font-size:11px;line-height:13px;color:#777;font-weight:normal;letter-spacing:-0.05px;">11/19/2021</div>
<div class="t" style="left:1532px;top:968.84px;font-size:12px;line-height:14px;color:#006096;font-weight:normal;letter-spacing:-0.1px;">IRC-0014176</div>
<div class="t" style="right:222px;top:969.02px;font-size:11.5px;line-height:14px;color:#222;font-weight:normal;letter-spacing:-0.3px;text-align:right">$100.00</div>
<div class="a" style="left:1450px;top:1020px;width:259px;height:4px;background:#ebebeb;"></div>
<div class="t" style="left:1467.5px;top:1036.67px;font-size:12.5px;line-height:15px;color:#222;font-weight:bold;letter-spacing:0.0px;">Open Balance</div>
</body></html>
